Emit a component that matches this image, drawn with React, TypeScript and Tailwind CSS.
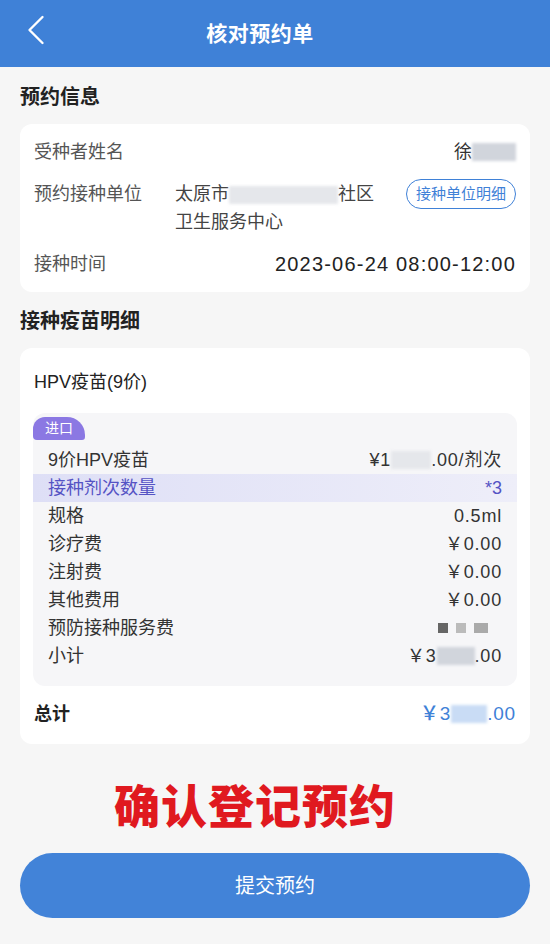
import { ChevronLeft } from "lucide-react";

const FONT = { fontFamily: '"Liberation Sans", "Noto Sans CJK SC", sans-serif' };

const Blur = ({ w, tone = "bg-gray-300" }: { w: string; tone?: string }) => (
  <span className={`inline-block h-[18px] align-middle blur-[1.5px] ${w} ${tone}`} />
);

const fees = [
  { label: "规格", value: "0.5ml" },
  { label: "诊疗费", value: "￥0.00" },
  { label: "注射费", value: "￥0.00" },
  { label: "其他费用", value: "￥0.00" },
];

export default function App() {
  return (
    <div className="min-h-screen w-[550px] bg-[#f6f6f6] text-[#333]" style={FONT}>
      {/* Header */}
      <header className="h-[67px] bg-[#3f81d7] flex items-center justify-center relative pr-[30px]">
        <ChevronLeft className="absolute left-[10px] top-[4px] w-[52px] h-[52px] text-white" strokeWidth={1.1} />
        <h1 className="text-[21px] font-bold text-white tracking-wide">核对预约单</h1>
      </header>

      <main className="px-5">
        <h2 className="pt-4 pb-[13px] text-[20px] leading-[28px] font-bold text-[#222]">预约信息</h2>

        {/* Appointment info */}
        <section className="bg-white rounded-xl px-[14px] py-[14px] flex flex-col gap-[14px] text-[18px] leading-[28px]">
          <div className="flex justify-between">
            <span className="text-[#555]">受种者姓名</span>
            <span className="flex items-center">徐<Blur w="w-[44px]" /></span>
          </div>
          <div className="flex items-start">
            <span className="text-[#555] w-[141px] shrink-0">预约接种单位</span>
            <span className="w-[210px] text-[#444]">
              太原市<Blur w="w-[109px]" tone="bg-gray-200" />社区
              <br />卫生服务中心
            </span>
            <span className="ml-auto mt-[-1px] h-[30px] px-[9px] rounded-full border border-[#3f81d7] text-[#3f81d7] text-[15px] leading-[28px]">
              接种单位明细
            </span>
          </div>
          <div className="flex justify-between items-center">
            <span className="text-[#555]">接种时间</span>
            <span className="text-[#222] text-[20px] tracking-[1.2px]">2023-06-24 08:00-12:00</span>
          </div>
        </section>

        <h2 className="pt-[15px] pb-[13px] text-[20px] leading-[28px] font-bold text-[#222]">接种疫苗明细</h2>

        {/* Vaccine detail */}
        <section className="bg-white rounded-xl px-[13px] pt-5 pb-4">
          <p className="px-px text-[18px] leading-[28px] text-[#222]">HPV疫苗(9价)</p>

          <div className="mt-[17px] bg-[#f6f6f8] rounded-xl pb-4 text-[18px] leading-[28px]">
            <span className="inline-block h-[23px] px-[12px] bg-[#8b78e3] text-white text-[14px] leading-[23px] rounded-tl-xl rounded-bl-[4px] rounded-tr-[18px] rounded-br-[3px]">
              进口
            </span>
            <div className="mt-[5px]">
              <div className="flex justify-between px-[15px]">
                <span>9价HPV疫苗</span>
                <span className="flex items-center tracking-[0.8px]">¥1<Blur w="w-[40px]" tone="bg-gray-200" />.00/剂次</span>
              </div>
              <div className="flex justify-between px-[15px] bg-gradient-to-r from-[#dedff6] to-[#eeeef9] text-[#5553c4]">
                <span>接种剂次数量</span>
                <span>*3</span>
              </div>
              {fees.map((f) => (
                <div key={f.label} className="flex justify-between px-[15px]">
                  <span>{f.label}</span>
                  <span className="tracking-[0.8px]">{f.value}</span>
                </div>
              ))}
              <div className="flex justify-between px-[15px]">
                <span>预防接种服务费</span>
                <span className="flex items-center gap-[8px] pr-[14px]">
                  <span className="w-[10px] h-[10px] bg-[#666]" />
                  <span className="w-[10px] h-[10px] bg-[#bbb]" />
                  <span className="w-[14px] h-[10px] bg-[#aaa] blur-[0.5px]" />
                </span>
              </div>
              <div className="flex justify-between px-[15px]">
                <span>小计</span>
                <span className="flex items-center tracking-[0.8px]">￥3<Blur w="w-[38px]" />.00</span>
              </div>
            </div>
          </div>

          <div className="mt-[14px] flex justify-between px-px text-[18px] leading-[28px]">
            <span className="font-bold text-[#222]">总计</span>
            <span className="flex items-center text-[19px] font-medium tracking-[0.8px] text-[#3f81d7]">
              ￥3<Blur w="w-[36px]" tone="bg-[#c9dcf5]" />.00
            </span>
          </div>
        </section>

        <p className="mt-[38px] pr-[40px] text-center text-[46px] leading-[50px] font-black text-[#e0191f] tracking-[1px]">
          确认登记预约
        </p>

        <button className="mt-[21px] w-full h-[65px] rounded-full bg-[#4283d8] text-white text-[20px]">
          提交预约
        </button>
      </main>
    </div>
  );
}
